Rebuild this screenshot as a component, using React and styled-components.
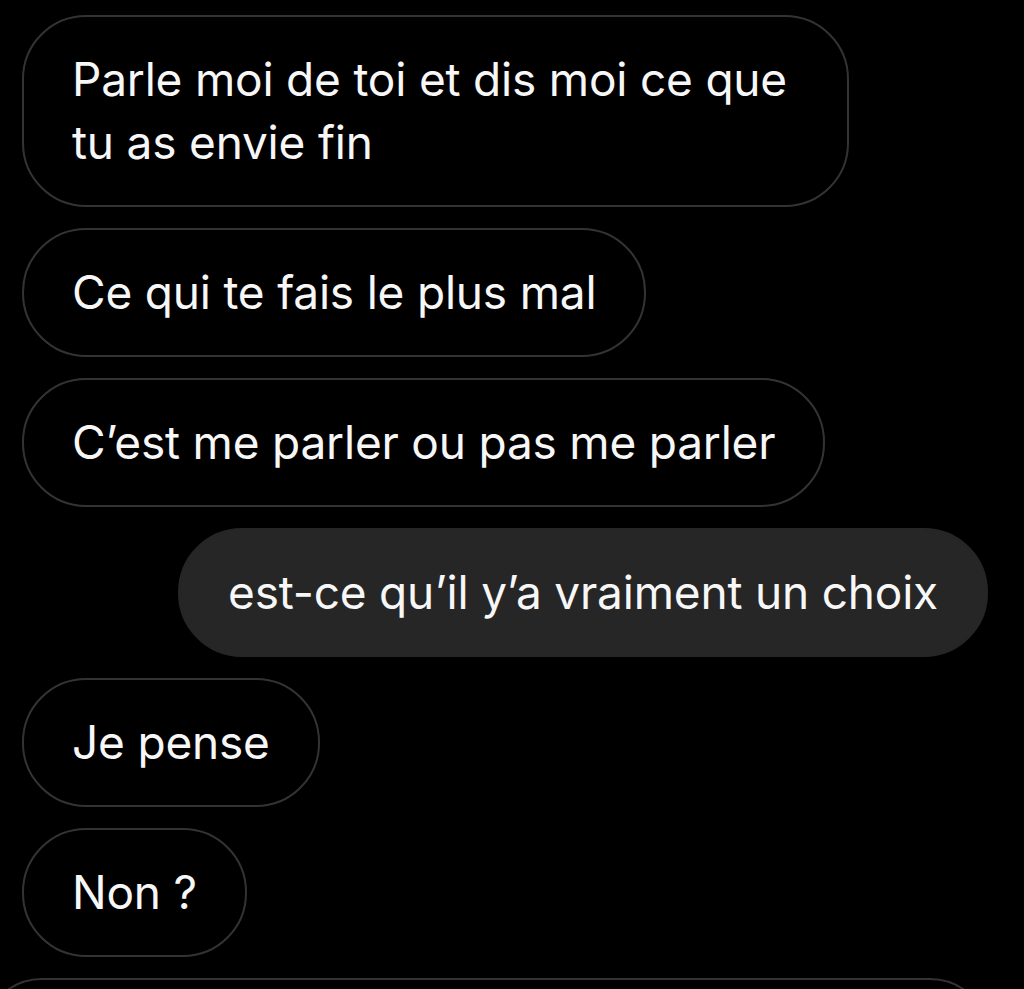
import React from "react";
import styled, { createGlobalStyle } from "styled-components";

const Global = createGlobalStyle`
  html, body { margin: 0; padding: 0; background: #000; }
  body { font-family: Inter, "Noto Sans", sans-serif; -webkit-font-smoothing: antialiased; }
`;

const Thread = styled.div`
  width: 1024px;
  height: 989px;
  overflow: hidden;
  box-sizing: border-box;
  padding: 15px 36px 0 22px;
  display: flex;
  flex-direction: column;
  gap: 21px;
  background: #000;
`;

const Bubble = styled.div`
  align-self: ${(p) => (p.$sent ? "flex-end" : "flex-start")};
  max-width: 827px;
  box-sizing: border-box;
  padding: 31px 48px;
  border-radius: 64px;
  border: 2px solid ${(p) => (p.$sent ? "#262626" : "#333")};
  background: ${(p) => (p.$sent ? "#262626" : "#000")};
  color: #f7f7f7;
  font-size: 46px;
  line-height: 63px;
  letter-spacing: -0.2px;
`;

const Partial = styled.div`
  flex-shrink: 0;
  margin-left: -40px;
  width: 1008px;
  height: 120px;
  box-sizing: border-box;
  border: 2px solid #333;
  border-radius: 64px;
`;

const messages = [
  { text: "Parle moi de toi et dis moi ce que tu as envie fin" },
  { text: "Ce qui te fais le plus mal" },
  { text: "C’est me parler ou pas me parler" },
  { text: "est-ce qu’il y’a vraiment un choix", sent: true },
  { text: "Je pense" },
  { text: "Non ?" },
];

export default function App() {
  return (
    <>
      <Global />
      <Thread>
        {messages.map((m, i) => (
          <Bubble key={i} $sent={m.sent}>
            {m.text}
          </Bubble>
        ))}
        <Partial />
      </Thread>
    </>
  );
}
